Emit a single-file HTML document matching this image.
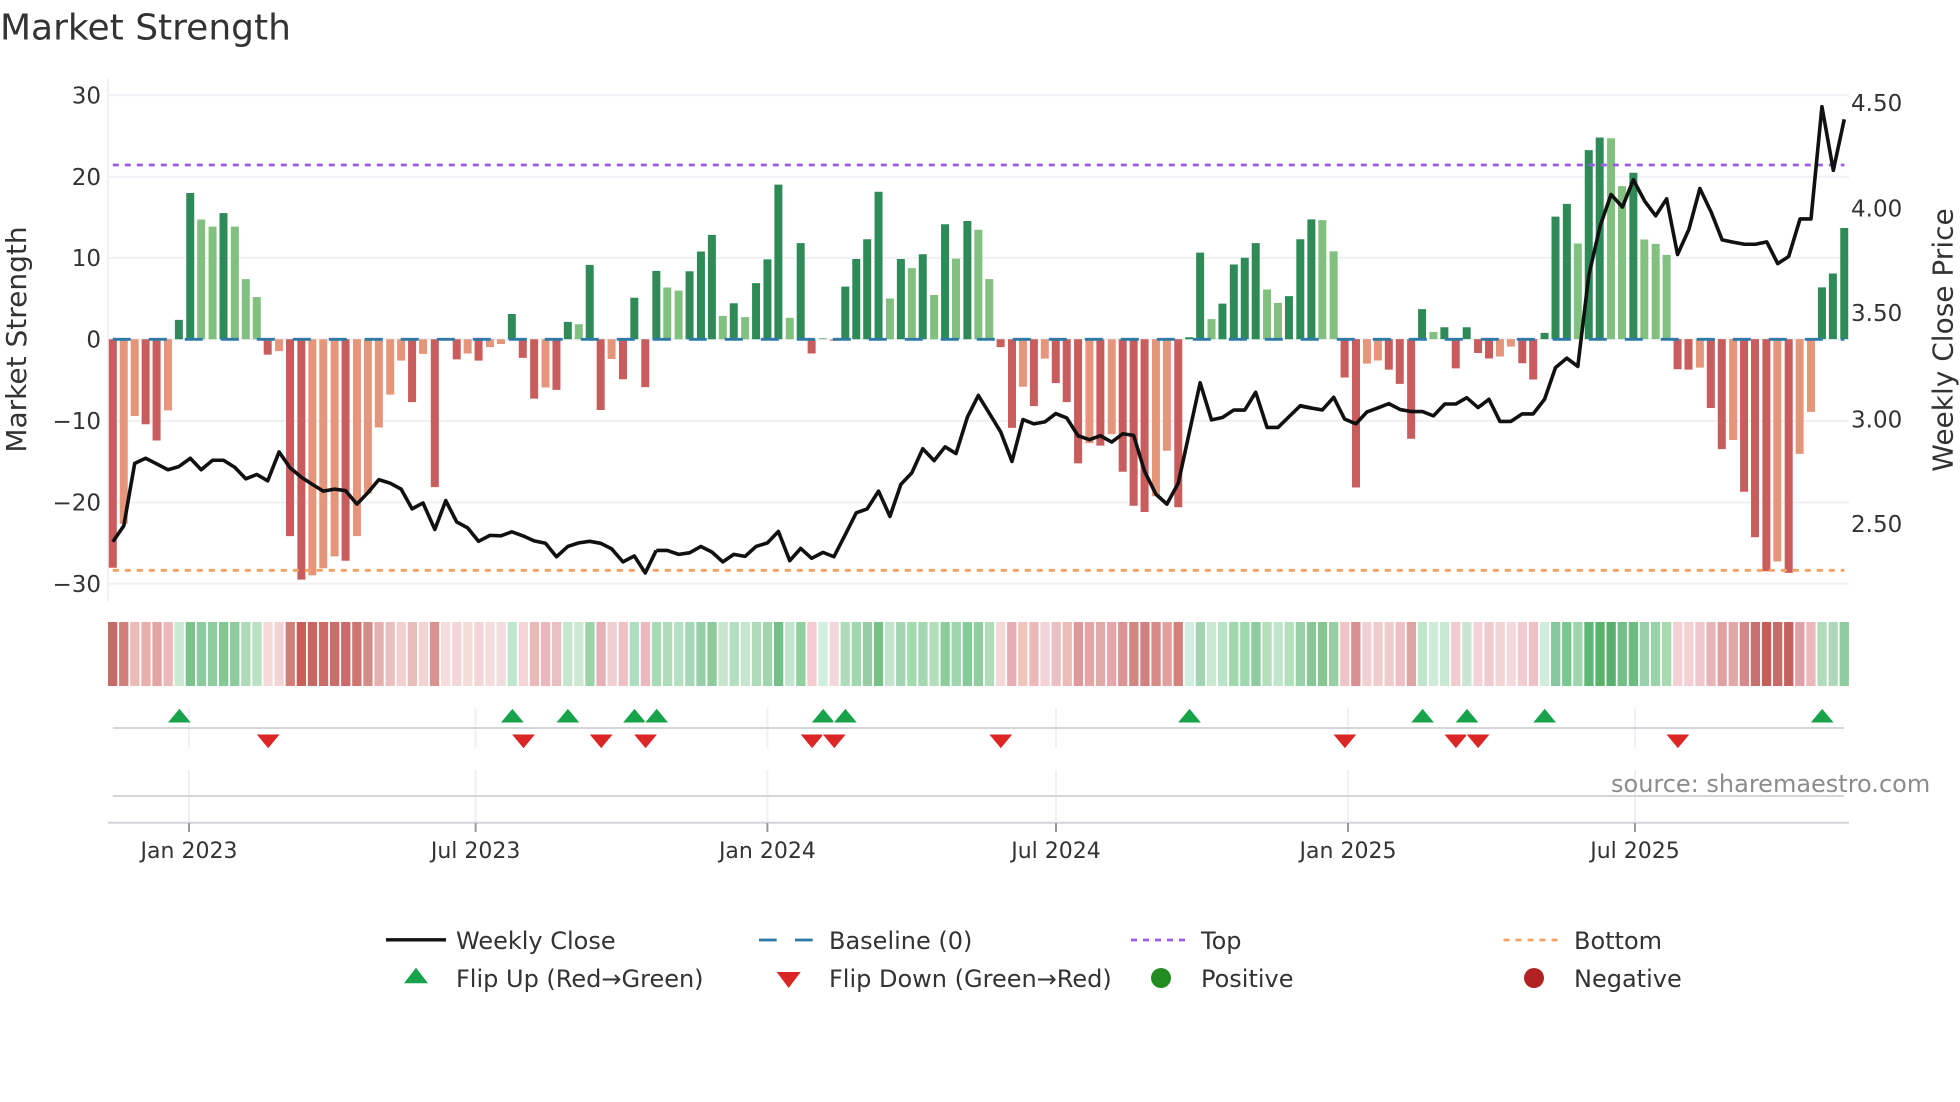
<!DOCTYPE html>
<html lang="en">
<head>
<meta charset="utf-8">
<title>Market Strength</title>
<style>
html,body{margin:0;padding:0;background:#fff;}
body{width:1960px;height:1102px;position:relative;overflow:hidden;}
svg{position:absolute;left:0;top:0;}
svg text{font-family:"DejaVu Sans","Liberation Sans",sans-serif;fill:#333;}
#heat{position:absolute;left:108.2px;top:622px;height:640px;display:flex;width:17450px;transform:scale(.1);transform-origin:0 0;}
#heat i{display:block;flex:0 0 93px;height:640px;margin-right:18px;}
</style>
</head>
<body>
<svg width="1960" height="1102" viewBox="0 0 1960 1102" xmlns="http://www.w3.org/2000/svg">
<defs>
<path id="u" d="M-12.5 723L0 708L12.5 723Z" fill="#16a34a" stroke="#fff" stroke-width="1"/>
<path id="d" d="M-12.5 734L12.5 734L0 749Z" fill="#dc2626" stroke="#fff" stroke-width="1"/>
</defs>

<!-- grid -->
<g stroke="#eff1f6" stroke-width="2" fill="none">
<path d="M108 79V601"/>
<path d="M108 95.3H1849M108 176.7H1849M108 257.8H1849M108 339.3H1849M108 421H1849M108 502.5H1849M108 583.7H1849"/>
</g>

<!-- bars zone 1 -->
<g transform="scale(.42092,.39541)" fill="none" stroke-width="19">
<path stroke="#2e8b57" d="M425 858V809M452 858V488M531 858V539M1216 858V794M1349 858V814M1401 858V670M1507 858V753"/>
<path stroke="#81c07f" d="M478 858V555M505 858V573M558 858V573M584 858V706M610 858V751M1375 858V820"/>
<path stroke="#c95c5c" d="M268 858V1436M346 858V1073M372 858V1114M636 858V897M689 858V1356M716 858V1466M821 858V1418M979 858V1017M1033 858V1232M1085 858V909M1137 858V912M1242 858V905M1269 858V1008M1322 858V986M1427 858V1037M1480 858V959M1533 858V979"/>
<path stroke="#e5967a" d="M294 858V1325M320 858V1052M399 858V1038M663 858V888M742 858V1455M768 858V1437M795 858V1407M848 858V1356M874 858V1248M900 858V1081M927 858V998M953 858V912M1005 858V895M1111 858V894M1164 858V878M1190 858V870M1296 858V980M1453 858V908"/>
</g>
<!-- bars zone 2 -->
<g transform="translate(650,0) scale(.42092,.39541)" fill="none" stroke-width="19">
<path stroke="#2e8b57" d="M15 858V685M94 858V686M121 858V636M147 858V594M199 858V767M252 858V716M279 858V656M305 858V467M358 858V615M464 858V725M490 858V655M516 858V605M543 858V485M596 858V655M648 858V643M701 858V567M754 858V559M1281 858V853M1307 858V639M1360 858V768M1387 858V669M1413 858V652M1439 858V615M1518 858V749M1545 858V605"/>
<path stroke="#81c07f" d="M41 858V727M68 858V735M173 858V799M226 858V802M332 858V804M411 858V855M570 858V755M622 858V678M675 858V746M727 858V654M780 858V581M806 858V706M1334 858V807M1466 858V732M1492 858V766"/>
<path stroke="#c95c5c" d="M384 858V894M833 858V878M860 858V1082M912 858V1027M964 858V969M990 858V1017M1017 858V1172M1070 858V1127M1123 858V1193M1149 858V1279M1175 858V1295M1255 858V1283"/>
<path stroke="#e5967a" d="M437 858V862M886 858V978M938 858V907M1044 858V1121M1097 858V1098M1202 858V1255M1228 858V1140"/>
</g>
<!-- bars zone 3 -->
<g transform="translate(1300,60) scale(.42092,.39541)" fill="none" stroke-width="19">
<path stroke="#2e8b57" d="M27 706V403M290 706V630M343 706V676M396 706V676M581 706V690M607 706V396M634 706V364M686 706V228M712 706V196M792 706V285M1240 706V575M1266 706V540M1293 706V425"/>
<path stroke="#81c07f" d="M53 706V405M80 706V484M317 706V688M660 706V464M739 706V198M765 706V319M818 706V454M845 706V465M871 706V493"/>
<path stroke="#c95c5c" d="M106 706V803M133 706V1081M211 706V783M237 706V819M264 706V958M370 706V780M423 706V741M449 706V755M528 706V767M554 706V808M897 706V782M923 706V783M976 706V880M1002 706V984M1055 706V1092M1081 706V1207M1108 706V1293M1161 706V1297"/>
<path stroke="#e5967a" d="M159 706V768M185 706V760M475 706V750M501 706V725M950 706V778M1029 706V961M1134 706V1268M1187 706V996M1214 706V890"/>
</g>

<!-- reference lines -->
<path d="M112.8 339.3H1844.4" stroke="#2e7aa6" stroke-width="2.8" stroke-dasharray="18 18" fill="none"/>
<path d="M112.8 165H1844.4" stroke="#9b5de5" stroke-width="2.8" stroke-dasharray="6 6" fill="none"/>
<path d="M112.8 570.3H1844.4" stroke="#f4a261" stroke-width="2.8" stroke-dasharray="6 6" fill="none"/>

<!-- weekly close -->
<g fill="none" stroke="#111" stroke-width="3.6" stroke-linejoin="round" stroke-linecap="butt">
<polyline transform="scale(.42092,.39541)" vector-effect="non-scaling-stroke" points="268,1370 294,1330 320,1172 346,1159 372,1173 399,1188 425,1180 452,1159 478,1188 505,1164 531,1164 558,1182 584,1211 610,1200 636,1216 663,1143 689,1183 716,1207 742,1225 768,1242 795,1237 821,1241 848,1275 874,1246 900,1213 927,1222 953,1237 979,1287 1005,1272 1033,1339 1059,1266 1085,1320 1111,1335 1137,1369 1164,1354 1190,1355 1216,1345 1242,1355 1269,1368 1296,1374 1322,1408 1349,1382 1375,1373 1401,1369 1427,1374 1453,1388 1480,1421 1507,1406 1533,1449 1559,1392"/>
<polyline transform="translate(650,0) scale(.42092,.39541)" vector-effect="non-scaling-stroke" points="15,1392 41,1392 68,1402 94,1398 121,1382 147,1396 173,1421 199,1402 226,1407 252,1382 279,1373 305,1344 332,1418 358,1387 384,1412 411,1397 437,1408 464,1352 490,1297 516,1287 543,1242 570,1306 596,1225 622,1196 648,1135 675,1165 701,1130 727,1147 754,1055 780,1000 806,1045 833,1092 860,1167 886,1061 912,1072 938,1067 964,1046 990,1057 1017,1102 1044,1112 1070,1102 1097,1118 1123,1097 1149,1101 1175,1192 1202,1250 1228,1275 1255,1222 1281,1095 1307,968 1334,1062 1360,1056 1387,1037 1413,1037 1439,992 1466,1081 1492,1081 1518,1054 1545,1026 1571,1032"/>
<polyline transform="translate(1300,60) scale(.42092,.39541)" vector-effect="non-scaling-stroke" points="0,875 26,880 53,885 80,853 106,908 133,920 159,890 185,880 211,869 238,884 264,889 291,889 317,900 344,870 370,870 396,854 423,879 449,858 475,914 501,914 528,895 554,895 581,858 607,778 634,754 660,775 686,545 713,420 739,340 766,372 792,303 819,357 845,394 871,351 897,492 924,428 950,325 977,385 1003,455 1030,461 1056,466 1082,466 1109,460 1135,515 1161,497 1188,402 1214,402 1240,118 1267,279 1293,150"/>
</g>

<!-- titles and y ticks -->
<text x="0" y="39.5" font-size="36">Market Strength</text>
<g font-size="23" text-anchor="end">
<text x="101" y="103.5">30</text>
<text x="101" y="185">20</text>
<text x="101" y="266">10</text>
<text x="101" y="347.5">0</text>
<text x="101" y="429">−10</text>
<text x="101" y="510.7">−20</text>
<text x="101" y="592">−30</text>
</g>
<g font-size="23">
<text x="1851" y="111">4.50</text>
<text x="1851" y="216.5">4.00</text>
<text x="1851" y="321">3.50</text>
<text x="1851" y="427.5">3.00</text>
<text x="1851" y="532">2.50</text>
</g>
<text font-size="28" text-anchor="middle" transform="translate(26,339.5) rotate(-90)">Market Strength</text>
<text font-size="28" text-anchor="middle" transform="translate(1952.5,340) rotate(-90)">Weekly Close Price</text>

<!-- lower panel -->
<g stroke="#eff1f6" stroke-width="2" fill="none">
<path d="M189 708V748M189 770V823M475.6 708V748M475.6 770V823M767.4 708V748M767.4 770V823M1056 708V748M1056 770V823M1348 708V748M1348 770V823M1635 708V748M1635 770V823"/>
</g>
<g stroke="#d3d5da" stroke-width="2" fill="none">
<path d="M112.8 728H1844M112.8 796H1844"/>
<path d="M108 822.7H1849"/>
</g>
<path d="M189 823V832M475.6 823V832M767.4 823V832M1056 823V832M1348 823V832M1635 823V832" stroke="#999" stroke-width="2" fill="none"/>
<use href="#u" x="179.4"/><use href="#u" x="512.4"/><use href="#u" x="567.9"/><use href="#u" x="634.5"/><use href="#u" x="656.7"/><use href="#u" x="823.2"/><use href="#u" x="845.4"/><use href="#u" x="1189.5"/><use href="#u" x="1422.6"/><use href="#u" x="1467"/><use href="#u" x="1544.7"/><use href="#u" x="1822.2"/>
<use href="#d" x="268.2"/><use href="#d" x="523.5"/><use href="#d" x="601.2"/><use href="#d" x="645.6"/><use href="#d" x="812.1"/><use href="#d" x="834.3"/><use href="#d" x="1000.8"/><use href="#d" x="1344.9"/><use href="#d" x="1455.9"/><use href="#d" x="1478.1"/><use href="#d" x="1677.9"/>
<g font-size="22" text-anchor="middle">
<text x="189" y="858">Jan 2023</text>
<text x="475.6" y="858">Jul 2023</text>
<text x="767.4" y="858">Jan 2024</text>
<text x="1056" y="858">Jul 2024</text>
<text x="1348" y="858">Jan 2025</text>
<text x="1635" y="858">Jul 2025</text>
</g>
<text x="1611" y="792" font-size="24" style="fill:#8c8c8c">source: sharemaestro.com</text>

<!-- legend -->
<path d="M386 939.8H446" stroke="#111" stroke-width="3.3" fill="none"/>
<path d="M759 940H776.7M795 940H812.7" stroke="#2e7aa6" stroke-width="2.8" fill="none"/>
<path d="M1131 940H1185.5" stroke="#9b5de5" stroke-width="2.8" stroke-dasharray="6 6" fill="none"/>
<path d="M1503.5 940H1558" stroke="#f4a261" stroke-width="2.8" stroke-dasharray="6 6" fill="none"/>
<path d="M404 983.3L416 967.7L428 983.3Z" fill="#16a34a"/>
<path d="M776.7 972L800.7 972L788.7 988Z" fill="#dc2626"/>
<circle cx="1161" cy="978" r="10" fill="#228b22"/>
<circle cx="1534" cy="978" r="10" fill="#b22222"/>
<g font-size="24">
<text x="456" y="949">Weekly Close</text>
<text x="829" y="949">Baseline (0)</text>
<text x="1201" y="949">Top</text>
<text x="1574" y="949">Bottom</text>
<text x="456" y="987">Flip Up (Red→Green)</text>
<text x="829" y="987">Flip Down (Green→Red)</text>
<text x="1201" y="987">Positive</text>
<text x="1574" y="987">Negative</text>
</g>
</svg>

<div id="heat"><i style="background:#c76a66"></i><i style="background:#d07f7b"></i><i style="background:#e9bcb8"></i><i style="background:#e7b0ad"></i><i style="background:#e3a5a3"></i><i style="background:#ebb9ba"></i><i style="background:#c9e9d2"></i><i style="background:#79c48c"></i><i style="background:#8ccaa0"></i><i style="background:#90cc9f"></i><i style="background:#83c994"></i><i style="background:#8ccb9d"></i><i style="background:#aedab8"></i><i style="background:#b8e2c2"></i><i style="background:#f6dada"></i><i style="background:#f3d4d6"></i><i style="background:#d27f79"></i><i style="background:#c96058"></i><i style="background:#c8655f"></i><i style="background:#cb6a66"></i><i style="background:#c96c6a"></i><i style="background:#cb6b6a"></i><i style="background:#cc7571"></i><i style="background:#d58b88"></i><i style="background:#e6b0b1"></i><i style="background:#e8c0bc"></i><i style="background:#f2cfd0"></i><i style="background:#e9bdbb"></i><i style="background:#f3d3d4"></i><i style="background:#da928c"></i><i style="background:#f5dcdd"></i><i style="background:#f4d6d8"></i><i style="background:#f4dcd8"></i><i style="background:#f3d5d6"></i><i style="background:#f5dcdc"></i><i style="background:#f0dcdc"></i><i style="background:#bfe6cf"></i><i style="background:#f3d5d6"></i><i style="background:#e9b9b8"></i><i style="background:#ebb9bc"></i><i style="background:#e8c0c0"></i><i style="background:#c5e6ce"></i><i style="background:#cde9d4"></i><i style="background:#9cd4a9"></i><i style="background:#e6b0b4"></i><i style="background:#efd0d0"></i><i style="background:#ecc0c4"></i><i style="background:#acdfbe"></i><i style="background:#ebb9be"></i><i style="background:#a8dab6"></i><i style="background:#b0dcbc"></i><i style="background:#b5e0c4"></i><i style="background:#a6d7b6"></i><i style="background:#98cfa8"></i><i style="background:#8dcb9c"></i><i style="background:#c5e5cf"></i><i style="background:#b2dfbf"></i><i style="background:#c5e5cf"></i><i style="background:#b0dbbb"></i><i style="background:#9fd6ae"></i><i style="background:#75bf88"></i><i style="background:#c3e5cf"></i><i style="background:#90cf9e"></i><i style="background:#f2ccd0"></i><i style="background:#d0ede0"></i><i style="background:#f4d7dc"></i><i style="background:#aedcba"></i><i style="background:#a0d6ac"></i><i style="background:#95cba5"></i><i style="background:#75c288"></i><i style="background:#c2e3cc"></i><i style="background:#a4d4b2"></i><i style="background:#a2dbac"></i><i style="background:#a3d7b0"></i><i style="background:#b4deba"></i><i style="background:#8ccd9c"></i><i style="background:#a0d6ad"></i><i style="background:#84cb98"></i><i style="background:#92cd9e"></i><i style="background:#b2dbbc"></i><i style="background:#f4d8d8"></i><i style="background:#e6aeb2"></i><i style="background:#efc5bc"></i><i style="background:#ecb8b8"></i><i style="background:#f2d3d8"></i><i style="background:#eac0c4"></i><i style="background:#ecbcb8"></i><i style="background:#e0989a"></i><i style="background:#e3a5a6"></i><i style="background:#dfaaa8"></i><i style="background:#e5a5aa"></i><i style="background:#da9492"></i><i style="background:#d28680"></i><i style="background:#d28080"></i><i style="background:#d78a86"></i><i style="background:#e1a09e"></i><i style="background:#d5807a"></i><i style="background:#d0ede0"></i><i style="background:#a0d4b0"></i><i style="background:#c8e8d2"></i><i style="background:#b8e3c6"></i><i style="background:#a0d8ac"></i><i style="background:#9ed8ae"></i><i style="background:#8ccc9e"></i><i style="background:#b2deba"></i><i style="background:#bfe6cc"></i><i style="background:#b0e0bc"></i><i style="background:#98d0a8"></i><i style="background:#88c898"></i><i style="background:#88c690"></i><i style="background:#96d0a2"></i><i style="background:#eec4c8"></i><i style="background:#d88e92"></i><i style="background:#f0d0d2"></i><i style="background:#f0cccc"></i><i style="background:#eecccc"></i><i style="background:#eec0c4"></i><i style="background:#e0a4a4"></i><i style="background:#c0e6cc"></i><i style="background:#d0ecd8"></i><i style="background:#c8e8d4"></i><i style="background:#f0ccd0"></i><i style="background:#c8e6d2"></i><i style="background:#f2d4d8"></i><i style="background:#f0ccd0"></i><i style="background:#f2d4d4"></i><i style="background:#f3d8dc"></i><i style="background:#f0ccd0"></i><i style="background:#ecc2c4"></i><i style="background:#d2ecdc"></i><i style="background:#88c8a0"></i><i style="background:#78c890"></i><i style="background:#a0d4ac"></i><i style="background:#60b878"></i><i style="background:#58b468"></i><i style="background:#58b070"></i><i style="background:#70c088"></i><i style="background:#70bc80"></i><i style="background:#98d0ac"></i><i style="background:#98d4a8"></i><i style="background:#a8dab0"></i><i style="background:#f2d0d4"></i><i style="background:#f2d0d4"></i><i style="background:#eec8cc"></i><i style="background:#e8b4b8"></i><i style="background:#e0a0a0"></i><i style="background:#e0a8a8"></i><i style="background:#d88888"></i><i style="background:#c87070"></i><i style="background:#c45e58"></i><i style="background:#c86c6a"></i><i style="background:#c46260"></i><i style="background:#e0a0a8"></i><i style="background:#ecb8bc"></i><i style="background:#b0dcbc"></i><i style="background:#acd8b8"></i><i style="background:#90cca0"></i></div>
</body>
</html>
